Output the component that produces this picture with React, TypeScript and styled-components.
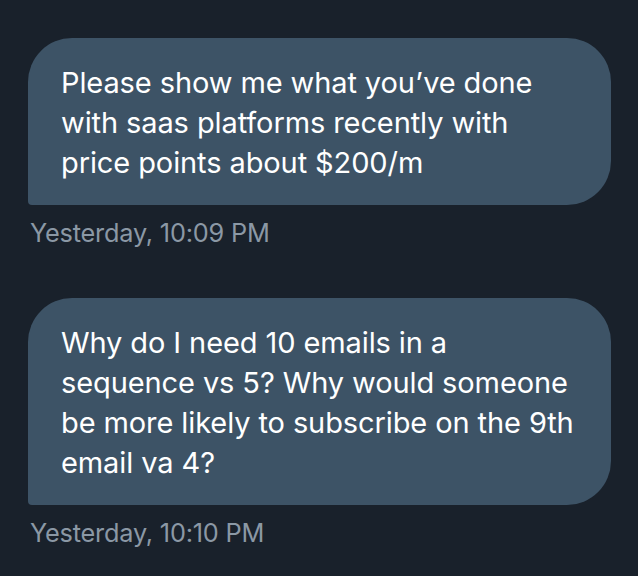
import { FC } from 'react'
import styled, { createGlobalStyle } from 'styled-components'

const GlobalStyle = createGlobalStyle`
  html, body {
    margin: 0;
    padding: 0;
    background-color: #19212b;
  }
  body {
    font-family: 'Inter', 'Noto Sans', sans-serif;
  }
`

const Thread = styled.div`
  width: 638px;
  height: 576px;
  box-sizing: border-box;
  padding: 38px 0 0 28px;

  display: flex;
  flex-direction: column;
  gap: 50px;
  background-color: #19212b;
  overflow: hidden;
`

const Message = styled.div`
  display: flex;
  flex-direction: column;
`

const Bubble = styled.div`
  width: 583px;
  box-sizing: border-box;
  padding: 25px 31px 22px 33px;
  background-color: #3d5366;
  border-radius: 44px 44px 44px 4px;
  color: #ffffff;
  font-size: 29px;
  line-height: 40px;
  letter-spacing: -0.1px;
`

const Stamp = styled.div`
  margin-top: 13px;
  padding-left: 2px;
  color: #8b98a5;
  font-size: 25.3px;
  line-height: 30px;
  letter-spacing: -0.2px;
`

const messages = [
  {
    text: 'Please show me what you’ve done with saas platforms recently with price points about $200/m',
    time: 'Yesterday, 10:09 PM',
  },
  {
    text: 'Why do I need 10 emails in a sequence vs 5? Why would someone be more likely to subscribe on the 9th email va 4?',
    time: 'Yesterday, 10:10 PM',
  },
]

const App: FC = () => {
  return (
    <>
      <GlobalStyle />
      <Thread>
        {messages.map((m) => (
          <Message key={m.time}>
            <Bubble>{m.text}</Bubble>
            <Stamp>{m.time}</Stamp>
          </Message>
        ))}
      </Thread>
    </>
  )
}

export default App
